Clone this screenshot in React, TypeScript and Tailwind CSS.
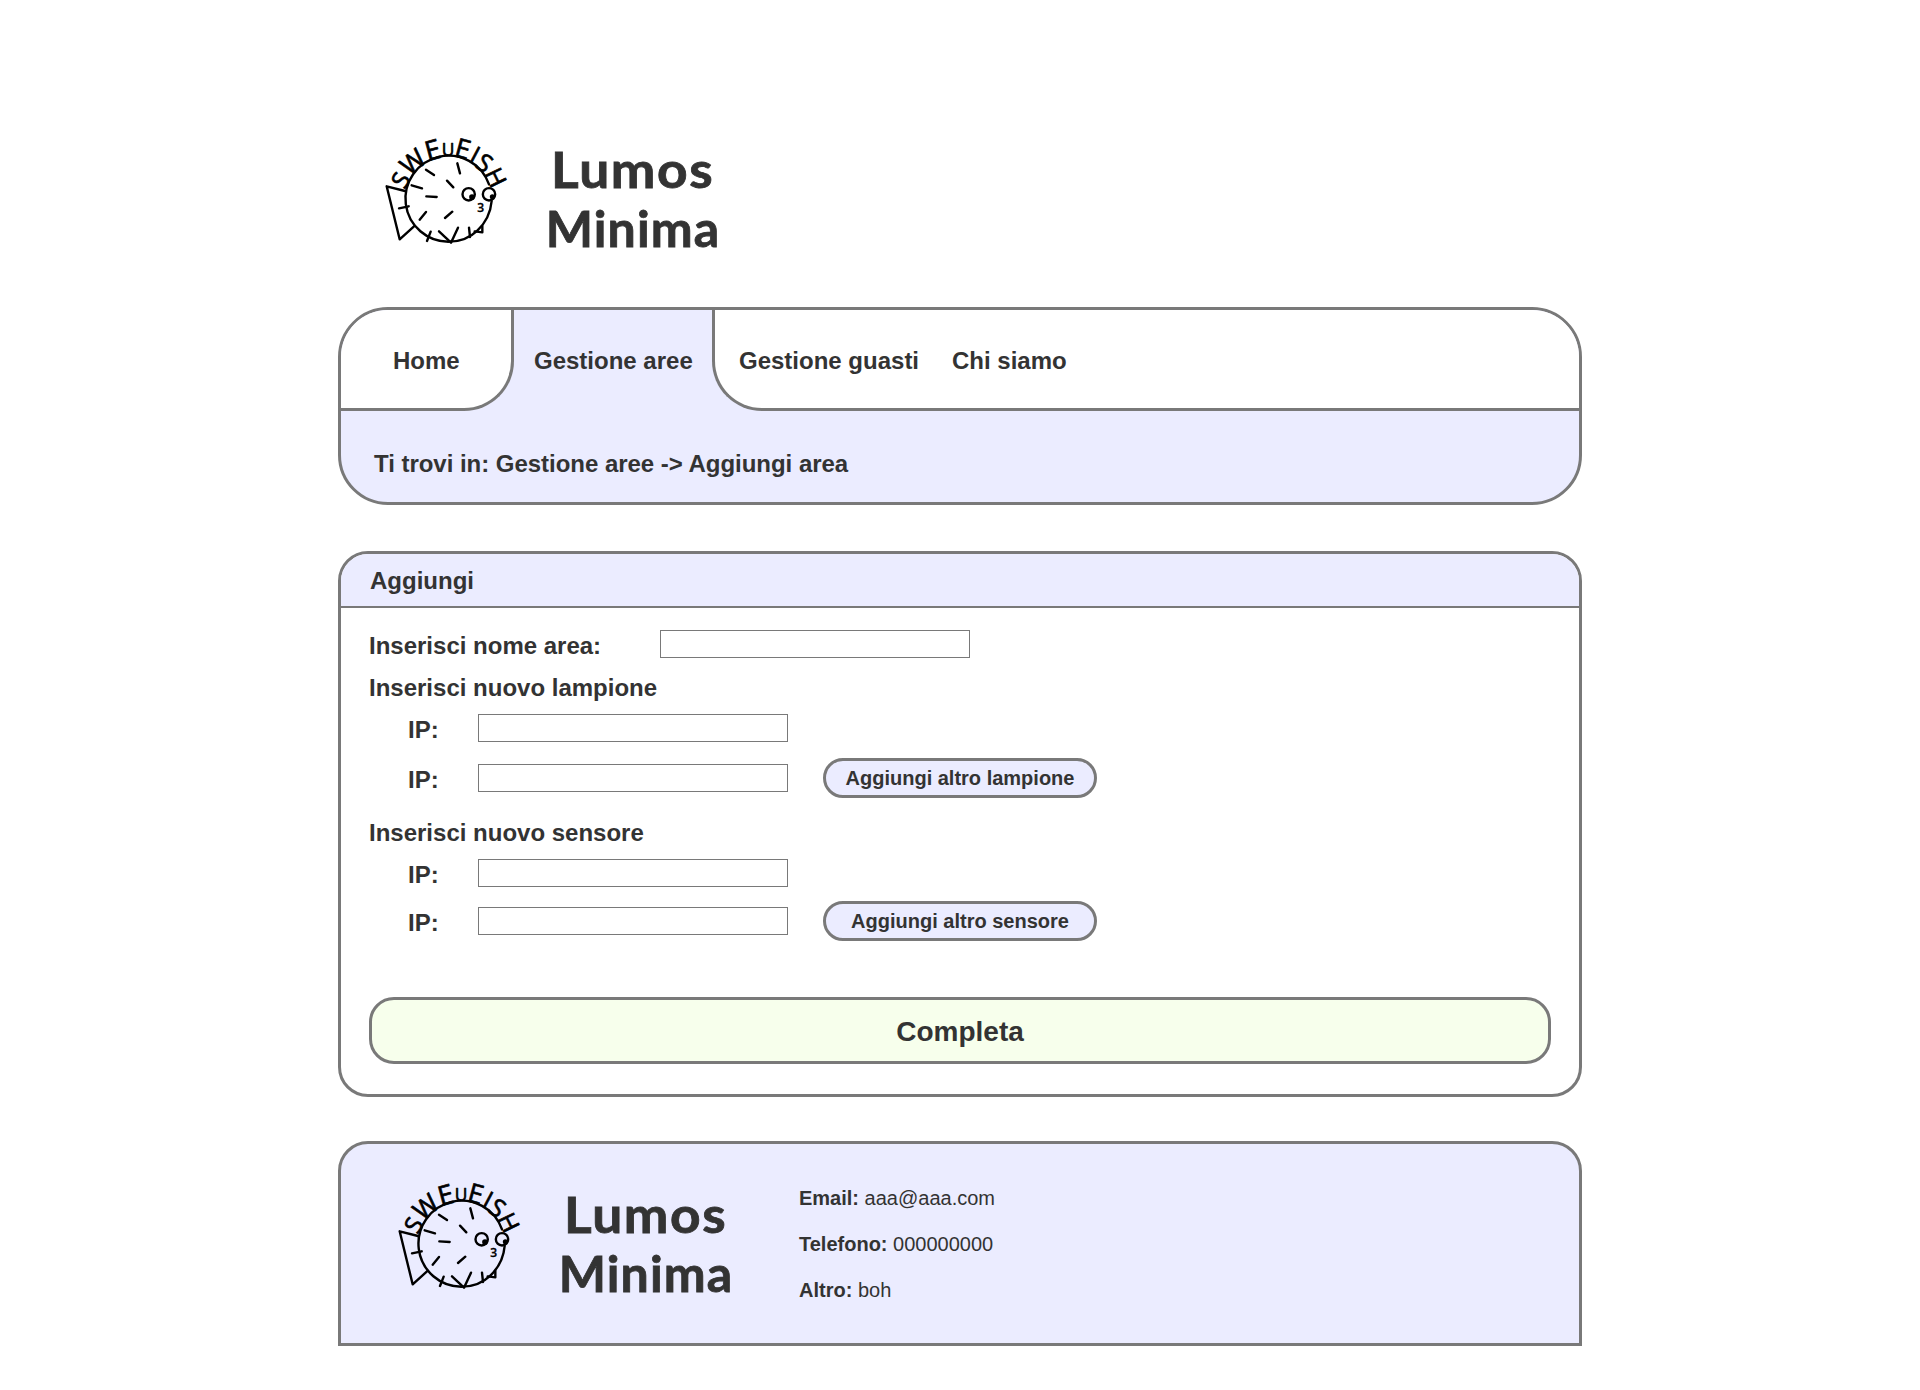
import React from "react";

type Glyph = { ch: string; x: number; y: number; r: number; s: number };

const letters: Glyph[] = [
  { ch: "S", x: 114, y: 178, r: -60, s: 72 },
  { ch: "W", x: 146, y: 132, r: -40, s: 78 },
  { ch: "E", x: 195, y: 103, r: -15, s: 82 },
  { ch: "U", x: 234, y: 94, r: 0, s: 52 },
  { ch: "E", x: 271, y: 99, r: 15, s: 80 },
  { ch: "I", x: 304, y: 110, r: 28, s: 70 },
  { ch: "S", x: 328, y: 135, r: 36, s: 74 },
  { ch: "H", x: 353, y: 169, r: 64, s: 74 },
];

/* Round fish whose spikes spell out the team name */
function FishLogo() {
  return (
    <svg
      viewBox="0 0 450 390"
      className="h-[130px] w-[150px] shrink-0"
      fill="none"
      stroke="#000"
      strokeWidth="7.2"
      strokeLinecap="round"
      strokeLinejoin="round"
    >
      <path d="M357 178A129 129 0 1 0 238 350M365 228C362 262 346 294 322 317C298 340 268 350 238 350" />
      <path d="M105 198L50 184L89 343L132 304M87 250L116 244" />
      <path d="M168 134L192 150M125 181L156 190M169 214L200 216M168 261L149 284M231 167L250 187M262 115L270 145M247 260L225 279" />
      <path d="M182 320L171 348M207 319L243 353L264 308M297 308L300 336M314 319L337 322L337 303" />
      <circle cx="296" cy="208" r="18.5" />
      <circle cx="357" cy="208" r="18.5" />
      <circle cx="306" cy="216" r="5" fill="#000" />
      <circle cx="367" cy="215" r="4" fill="#000" />
      <g fill="#000" strokeWidth="2" textAnchor="middle" className="font-['Open_Sans',sans-serif]">
        {letters.map((l, i) => (
          <text key={i} transform={`translate(${l.x} ${l.y}) rotate(${l.r})`} fontSize={l.s}>
            {l.ch}
          </text>
        ))}
        <text x="332" y="260" fontSize="36" fontWeight={600} strokeWidth="1">
          3
        </text>
      </g>
    </svg>
  );
}

function Brand() {
  return (
    <div className="flex">
      <FishLogo />
      <h1 className="ml-[14px] flex w-[198px] flex-col items-center pt-[15px] font-['Lato',sans-serif] text-[50px] leading-[58.5px] font-bold text-[#333333] [-webkit-text-stroke:0.8px_#333333]">
        <span className="scale-x-[1.065] tracking-[1.5px]">Lumos</span>
        <span className="tracking-[1.1px]">Minima</span>
      </h1>
    </div>
  );
}

function Field({ label, labelClass, children }: { label: string; labelClass: string; children?: React.ReactNode }) {
  return (
    <div className="flex h-7 items-center">
      <label className={`shrink-0 pt-1 leading-7 ${labelClass}`}>{label}</label>
      <input type="text" className="h-7 w-[310px] shrink-0 border border-[#797979] bg-white px-1 text-base outline-none" />
      {children}
    </div>
  );
}

function AddButton({ children }: { children: React.ReactNode }) {
  return (
    <button className="ml-[35px] h-10 w-[274px] shrink-0 rounded-[20px] border-[3px] border-[#797979] bg-[#ebecff] text-xl leading-[34px] font-bold whitespace-nowrap">
      {children}
    </button>
  );
}

export default function App() {
  return (
    <div className="min-h-[1390px] bg-white font-['Liberation_Sans',Arial,sans-serif] text-[#333333]">
      <div className="mx-auto w-[1244px]">
        <header className="h-[307px] pt-[125px] pl-8">
          <Brand />
        </header>

        <nav className="h-[198px] overflow-hidden rounded-[50px] border-[3px] border-[#797979] bg-[#ebecff] text-2xl font-bold whitespace-nowrap">
          <div className="flex h-[101px] leading-[102px]">
            <a className="w-[173px] rounded-br-[50px] border-r-[3px] border-b-[3px] border-[#797979] bg-white pl-[52px]">Home</a>
            <a className="w-[198px] pl-[20px]">Gestione aree</a>
            <div className="flex flex-1 rounded-bl-[50px] border-b-[3px] border-l-[3px] border-[#797979] bg-white">
              <a className="w-[237px] pl-[24px]">Gestione guasti</a>
              <a>Chi siamo</a>
            </div>
          </div>
          <p className="pt-[35px] pl-[33px] leading-[36px] tracking-[-0.03px]">Ti trovi in: Gestione aree -&gt; Aggiungi area</p>
        </nav>

        <main className="mt-[46px] h-[546px] overflow-hidden rounded-[30px] border-[3px] border-[#797979] bg-white text-2xl font-bold">
          <h2 className="h-[54px] border-b-2 border-[#797979] bg-[#ebecff] pl-[29px] leading-[53px]">Aggiungi</h2>
          <form className="px-7 pt-[22px]">
            <Field label="Inserisci nome area:" labelClass="w-[291px]" />
            <h3 className="mt-[15px] h-7 leading-[29px]">Inserisci nuovo lampione</h3>
            <div className="mt-[13px] flex flex-col gap-[22px] pl-[39px]">
              <Field label="IP:" labelClass="w-[70px]" />
              <Field label="IP:" labelClass="w-[70px]">
                <AddButton>Aggiungi altro lampione</AddButton>
              </Field>
            </div>
            <h3 className="mt-[26px] h-7 leading-[29px]">Inserisci nuovo sensore</h3>
            <div className="mt-[13px] flex flex-col gap-5 pl-[39px]">
              <Field label="IP:" labelClass="w-[70px]" />
              <Field label="IP:" labelClass="w-[70px]">
                <AddButton>Aggiungi altro sensore</AddButton>
              </Field>
            </div>
            <button className="mt-[62px] h-[67px] w-full rounded-[25px] border-[3px] border-[#797979] bg-[#f7ffec] pt-0.5 text-[28px] font-bold">
              Completa
            </button>
          </form>
        </main>

        <footer className="mt-11 flex h-[205px] rounded-t-[30px] border-[3px] border-[#797979] bg-[#ebecff] pt-[26px] pl-[42px]">
          <Brand />
          <ul className="ml-[54px] flex flex-col gap-[23px] pt-[17px] text-xl leading-[23px]">
            <li>
              <b>Email:</b> aaa@aaa.com
            </li>
            <li>
              <b>Telefono:</b> 000000000
            </li>
            <li>
              <b>Altro:</b> boh
            </li>
          </ul>
        </footer>
      </div>
    </div>
  );
}
